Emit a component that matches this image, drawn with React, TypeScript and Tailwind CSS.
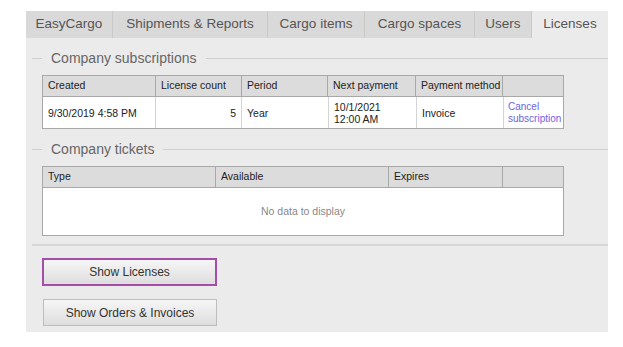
import React from 'react'

const tabs = [
  { label: 'EasyCargo', w: 'w-[87px]' },
  { label: 'Shipments & Reports', w: 'w-[155px]' },
  { label: 'Cargo items', w: 'w-[97px]' },
  { label: 'Cargo spaces', w: 'w-[110px]' },
  { label: 'Users', w: 'w-[57px]' },
  { label: 'Licenses', w: 'w-[76px]', active: true },
]

function Legend({ title }: { title: string }) {
  return (
    <div className="flex items-center h-[18px] ml-[6px]">
      <div className="w-[10px] h-px bg-[#cfcfcf]" />
      <span className="px-[9px] text-[14px] leading-none text-[#666]">{title}</span>
      <div className="flex-1 h-px bg-[#cfcfcf]" />
    </div>
  )
}

function HeaderCell({ w, children, last }: { w: string; children?: React.ReactNode; last?: boolean }) {
  return (
    <div className={`${w} h-full flex items-center px-[5px] whitespace-nowrap ${last ? '' : 'border-r border-[#a8a8a8]'}`}>
      {children}
    </div>
  )
}

export default function App() {
  return (
    <div className="w-[623px] h-[347px] bg-white pt-[11px] pl-[26px]" style={{ fontFamily: '"Liberation Sans", Arial, sans-serif' }}>
      <div className="w-[582px] h-[321px] bg-[#ebebeb] flex flex-col">
        {/* Tabs */}
        <div className="flex h-[27px] shrink-0">
          {tabs.map((t, i) => (
            <div
              key={t.label}
              className={`${t.w} h-full flex items-center justify-center text-[13.5px] text-[#555] ${
                t.active ? 'bg-[#ebebeb]' : 'bg-[#d9d9d9]'
              } ${i < tabs.length - 1 ? 'border-r border-[#c9c9c9]' : ''}`}
            >
              {t.label}
            </div>
          ))}
        </div>

        {/* Company subscriptions */}
        <div className="mt-[11px]">
          <Legend title="Company subscriptions" />
        </div>
        <div className="mt-[8px] ml-[16px] w-[522px] border border-[#a8a8a8] text-[10.5px] text-[#222]">
          <div className="flex h-[21px] bg-[#dcdcdc] border-b border-[#a8a8a8]">
            <HeaderCell w="w-[113px]">Created</HeaderCell>
            <HeaderCell w="w-[86px]">License count</HeaderCell>
            <HeaderCell w="w-[86px]">Period</HeaderCell>
            <HeaderCell w="w-[88px]">Next payment</HeaderCell>
            <HeaderCell w="w-[87px]">Payment method</HeaderCell>
            <HeaderCell w="flex-1" last />
          </div>
          <div className="flex h-[31px] bg-white leading-[12px]">
            <div className="w-[113px] flex items-center px-[5px] border-r border-[#d4d4d4]">9/30/2019 4:58 PM</div>
            <div className="w-[86px] flex items-center justify-end px-[5px] border-r border-[#d4d4d4]">5</div>
            <div className="w-[86px] flex items-center px-[5px]">Year</div>
            <div className="w-[88px] flex flex-col justify-center px-[5px] border-l border-[#d4d4d4]">
              <span>10/1/2021</span>
              <span>12:00 AM</span>
            </div>
            <div className="w-[87px] flex items-center px-[5px] border-l border-[#d4d4d4]">Invoice</div>
            <div className="flex-1 flex flex-col justify-center pl-[4px] border-l border-[#d4d4d4] whitespace-nowrap text-[10px] text-[#6b63e6]">
              <span>Cancel</span>
              <span>subscription</span>
            </div>
          </div>
        </div>

        {/* Company tickets */}
        <div className="mt-[11px]">
          <Legend title="Company tickets" />
        </div>
        <div className="mt-[8px] ml-[16px] w-[522px] border border-[#a8a8a8] text-[10.5px] text-[#222]">
          <div className="flex h-[21px] bg-[#dcdcdc] border-b border-[#a8a8a8]">
            <HeaderCell w="w-[173px]">Type</HeaderCell>
            <HeaderCell w="w-[173px]">Available</HeaderCell>
            <HeaderCell w="w-[114px]">Expires</HeaderCell>
            <HeaderCell w="flex-1" last />
          </div>
          <div className="h-[47px] bg-white flex items-center justify-center text-[#888]">No data to display</div>
        </div>

        <div className="mt-[8px] ml-[6px] h-[2px] bg-[#d6d6d6]" />

        {/* Buttons */}
        <button className="mt-[12px] ml-[16px] w-[175px] h-[28px] shrink-0 border-2 border-[#a64ca9] bg-gradient-to-b from-[#f6f6f6] to-[#dedede] text-[12px] text-[#333] flex items-center justify-center">
          Show Licenses
        </button>
        <button className="mt-[13px] ml-[17px] w-[174px] h-[27px] shrink-0 border border-[#bdbdbd] bg-gradient-to-b from-[#f6f6f6] to-[#dedede] text-[12px] text-[#333] flex items-center justify-center">
          Show Orders &amp; Invoices
        </button>
      </div>
    </div>
  )
}
